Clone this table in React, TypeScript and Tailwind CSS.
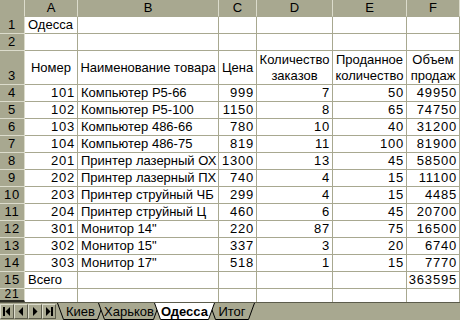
const rows: [number, string, number, number, number, number][] = [
  [101, 'Компьютер P5-66', 999, 7, 50, 49950],
  [102, 'Компьютер P5-100', 1150, 8, 65, 74750],
  [103, 'Компьютер 486-66', 780, 10, 40, 31200],
  [104, 'Компьютер 486-75', 819, 11, 100, 81900],
  [201, 'Принтер лазерный ОХ', 1300, 13, 45, 58500],
  [202, 'Принтер лазерный ПХ', 740, 4, 15, 11100],
  [203, 'Принтер струйный ЧБ', 299, 4, 15, 4485],
  [204, 'Принтер струйный Ц', 460, 6, 45, 20700],
  [301, 'Монитор 14"', 220, 87, 75, 16500],
  [302, 'Монитор 15"', 337, 3, 20, 6740],
  [303, 'Монитор 17"', 518, 1, 15, 7770],
]

const cell = 'border-r border-b border-[#a8a890] bg-white px-[3px] flex items-center whitespace-nowrap'
const num = cell + ' justify-end tracking-[0.8px] pr-[2px]'
const rowHead =
  'bg-[#a8a890] border-r border-b border-r-[#dcdccc] border-b-[#dcdccc] flex items-end justify-center leading-[16px] tracking-[0.8px]'
const colHead = 'bg-[#a8a890] border-r border-b border-r-[#dcdccc] border-b-[#a8a890] flex items-center justify-center'

function Tab({ label, width, active }: { label: string; width: number; active?: boolean }) {
  return (
    <div
      className={`relative h-[17px] flex items-center justify-center shrink-0 -ml-[6px] ${active ? 'z-10 font-bold' : ''}`}
      style={{ width }}
    >
      <svg className="absolute inset-0" width={width} height={17}>
        <polygon
          points={`0.5,0 ${width - 0.5},0 ${width - 6.5},16.5 6.5,16.5`}
          fill={active ? '#ffffff' : '#a8a890'}
        />
        <line x1={0.5} y1={0} x2={6.5} y2={16.5} stroke="#000" />
        <line x1={width - 0.5} y1={0} x2={width - 6.5} y2={16.5} stroke="#000" />
        <line x1={6.5} y1={16.5} x2={width - 6.5} y2={16.5} stroke="#000" />
      </svg>
      <span className="relative">{label}</span>
    </div>
  )
}

function NavBtn({ kind }: { kind: 'first' | 'prev' | 'next' | 'last' }) {
  return (
    <div className="w-[14px] h-[15px] bg-[#a8a890] border-t border-l border-t-[#dcdccc] border-l-[#dcdccc] border-r border-b border-r-[#5c5c4c] border-b-[#5c5c4c] flex items-center justify-center">
      <svg width="10" height="9" viewBox="0 0 10 9">
        {kind === 'first' && (
          <>
            <rect x="1" y="0" width="2" height="9" fill="#000" />
            <polygon points="8,0 8,9 3.5,4.5" fill="#000" />
          </>
        )}
        {kind === 'prev' && <polygon points="7,0 7,9 2.5,4.5" fill="#000" />}
        {kind === 'next' && <polygon points="3,0 3,9 7.5,4.5" fill="#000" />}
        {kind === 'last' && (
          <>
            <polygon points="2,0 2,9 6.5,4.5" fill="#000" />
            <rect x="7" y="0" width="2" height="9" fill="#000" />
          </>
        )}
      </svg>
    </div>
  )
}

export default function App() {
  return (
    <div
      className="w-[460px] h-[320px] overflow-hidden bg-[#a8a890] text-black text-[13px] flex flex-col"
      style={{ fontFamily: '"Liberation Sans", Arial, sans-serif' }}
    >
      <div className="grid grid-cols-[25px_53px_141px_38px_76px_74px_53px] grid-rows-[17px_17px_17px_34px_repeat(12,17px)_13px] leading-[16px]">
        {/* column headers */}
        <div className={colHead} />
        {['A', 'B', 'C', 'D', 'E', 'F'].map((c) => (
          <div key={c} className={colHead}>
            {c}
          </div>
        ))}

        {/* row 1 */}
        <div className={rowHead}>1</div>
        <div className={cell}>Одесса</div>
        <div className={cell} />
        <div className={cell} />
        <div className={cell} />
        <div className={cell} />
        <div className={cell} />

        {/* row 2 */}
        <div className={rowHead}>2</div>
        {[0, 1, 2, 3, 4, 5].map((i) => (
          <div key={i} className={cell} />
        ))}

        {/* row 3 */}
        <div className={rowHead}>3</div>
        <div className={cell + ' justify-center'}>Номер</div>
        <div className={cell + ' justify-center'}>Наименование товара</div>
        <div className={cell + ' justify-center'}>Цена</div>
        <div className={cell + ' justify-center text-center flex-col'}>
          <span>Количество</span>
          <span>заказов</span>
        </div>
        <div className={cell + ' justify-center text-center flex-col'}>
          <span>Проданное</span>
          <span>количество</span>
        </div>
        <div className={cell + ' justify-center text-center flex-col'}>
          <span>Объем</span>
          <span>продаж</span>
        </div>

        {rows.map((r, i) => (
          <div key={r[0]} className="contents">
            <div className={rowHead}>{i + 4}</div>
            <div className={num}>{r[0]}</div>
            <div className={cell}>{r[1]}</div>
            <div className={num}>{r[2]}</div>
            <div className={num}>{r[3]}</div>
            <div className={num}>{r[4]}</div>
            <div className={num}>{r[5]}</div>
          </div>
        ))}

        {/* row 15 */}
        <div className={rowHead}>15</div>
        <div className={cell}>Всего</div>
        <div className={cell} />
        <div className={cell} />
        <div className={cell} />
        <div className={cell} />
        <div className={num}>363595</div>

        {/* row 21, partially hidden behind the frozen split */}
        <div className="bg-[#a8a890] border-r border-r-[#dcdccc] border-b-2 border-b-[#2c2c24] flex justify-center items-end overflow-hidden tracking-[0.8px]">
          <span className="leading-[11px] text-[12px]">21</span>
        </div>
        {[0, 1, 2, 3, 4, 5].map((i) => (
          <div key={i} className="bg-white border-r border-[#a8a890]" />
        ))}
      </div>

      {/* sheet tabs */}
      <div className="h-[18px] border-t border-[#5c5c4c] flex items-start text-[13px] leading-[15px]">
        <div className="flex pt-px">
          <NavBtn kind="first" />
          <NavBtn kind="prev" />
          <NavBtn kind="next" />
          <NavBtn kind="last" />
        </div>
        <div className="flex pl-[7px]">
          <Tab label="Киев" width={47} />
          <Tab label="Харьков" width={62} />
          <Tab label="Одесса" width={61} active />
          <Tab label="Итог" width={46} />
        </div>
      </div>
    </div>
  )
}
